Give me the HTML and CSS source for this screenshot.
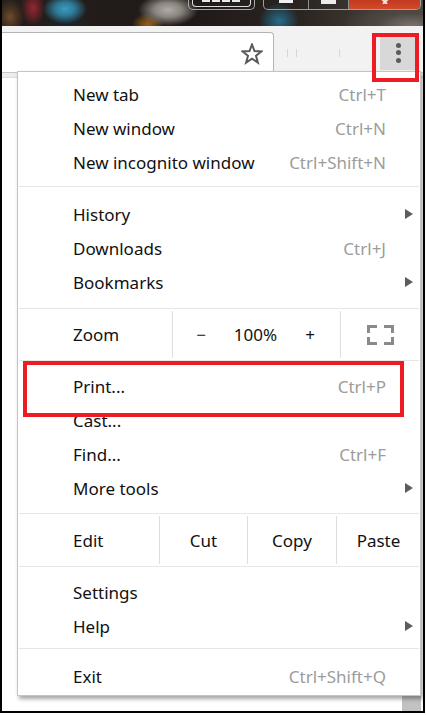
FILE: index.html
```html
<!DOCTYPE html>
<html lang="en">
<head>
    <meta charset="UTF-8">
    <meta name="viewport" content="width=device-width, initial-scale=1.0">
    <title>Chrome menu</title>
    <link rel="stylesheet" href="styles.css">
</head>
<body>
<div class="screen">
    <!-- window caption, only the bottom of it is visible -->
    <div class="titlebar">
        <div class="share"><div class="share-inner"><span class="share-label"></span></div></div>
        <div class="win-btns">
            <div class="win-btn min"><i></i></div>
            <div class="win-btn max"><i></i></div>
            <div class="win-btn close">
                <svg width="14" height="4" viewBox="0 0 14 4"><path d="M2 -3L9 4M12 -3L5 4" stroke="#f2e0dc" stroke-width="2"/></svg>
            </div>
        </div>
    </div>

    <div class="toolbar">
        <div class="omnibox">
            <svg class="star" width="22" height="22" viewBox="-1 -1 22 22">
                <polygon points="10,0.5 12.5,7.1 19.5,7.4 14,11.8 15.9,18.6 10,14.7 4.1,18.6 6,11.8 0.5,7.4 7.5,7.1" fill="none" stroke="#5a5a5a" stroke-width="2" stroke-linejoin="miter"/>
            </svg>
        </div>
        <div class="extensions">
            <span class="tick"></span>
            <span class="tick tick-near"></span>
            <span class="tick tick-far"></span>
        </div>
        <div class="menu-btn">
            <span class="dot"></span>
            <span class="dot"></span>
            <span class="dot"></span>
        </div>
    </div>

    <div class="page">
        <div class="page-top"></div>
        <div class="page-body">
            <div class="content"></div>
            <div class="scrollbar"></div>
        </div>
    </div>

    <!-- app menu -->
    <div class="menu">
        <div class="group group-tabs">
            <div class="item"><span class="label">New tab</span><span class="keys">Ctrl+T</span></div>
            <div class="item"><span class="label">New window</span><span class="keys">Ctrl+N</span></div>
            <div class="item"><span class="label">New incognito window</span><span class="keys">Ctrl+Shift+N</span></div>
        </div>
        <div class="sep"></div>
        <div class="group group-history">
            <div class="item sub"><span class="label">History</span></div>
            <div class="item"><span class="label">Downloads</span><span class="keys">Ctrl+J</span></div>
            <div class="item sub"><span class="label">Bookmarks</span></div>
        </div>
        <div class="sep"></div>
        <div class="split split-zoom">
            <div class="cell cell-label zoom-label">Zoom</div>
            <div class="cell zoom-ctrl">
                <span class="zoom-minus">−</span>
                <span class="zoom-value">100%</span>
                <span class="zoom-plus">+</span>
            </div>
            <div class="cell fullscreen">
                <svg width="27" height="20" viewBox="0 0 27 20">
                    <path d="M1.5 8V1.5H10M17 1.5H25.5V8M25.5 12V18.5H17M10 18.5H1.5V12" fill="none" stroke="#8a8a8a" stroke-width="3"/>
                </svg>
            </div>
        </div>
        <div class="sep"></div>
        <div class="group group-page">
            <div class="item"><span class="label">Print...</span><span class="keys">Ctrl+P</span></div>
            <div class="item"><span class="label">Cast...</span></div>
            <div class="item"><span class="label">Find...</span><span class="keys">Ctrl+F</span></div>
            <div class="item sub"><span class="label">More tools</span></div>
        </div>
        <div class="sep"></div>
        <div class="split split-edit">
            <div class="cell cell-label edit-label">Edit</div>
            <div class="cell edit-cut">Cut</div>
            <div class="cell edit-copy">Copy</div>
            <div class="cell edit-paste">Paste</div>
        </div>
        <div class="sep"></div>
        <div class="group group-settings">
            <div class="item"><span class="label">Settings</span></div>
            <div class="item sub"><span class="label">Help</span></div>
        </div>
        <div class="sep"></div>
        <div class="group group-exit">
            <div class="item"><span class="label">Exit</span><span class="keys">Ctrl+Shift+Q</span></div>
        </div>
    </div>

    <!-- red outlines drawn on top -->
    <div class="mark mark-menu"></div>
    <div class="mark mark-print"></div>
</div>
</body>
</html>
```

FILE: styles.css
```css
* {
    box-sizing: border-box;
}

body {
    margin: 0;
    background-color: #fff;
    font-family: "Noto Sans", "Open Sans", sans-serif;
}

.screen {
    position: relative;
    display: flex;
    flex-direction: column;
    width: 425px;
    height: 713px;
    border-left: 2px solid #000;
    border-right: 2px solid #000;
    border-bottom: 2px solid #000;
    overflow: hidden;
}

/* blurred wallpaper behind the caption buttons */
.titlebar {
    flex: none;
    display: flex;
    align-items: flex-start;
    gap: 8px;
    height: 26px;
    padding-left: 186px;
    background:
        radial-gradient(ellipse 12px 18px at 31px 8px, #8e2a33 0%, #6a2228 40%, transparent),
        radial-gradient(ellipse 22px 15px at 63px 9px, #3c9cbe 0%, #2d7896 45%, transparent),
        radial-gradient(ellipse 26px 9px at 66px 24px, #1a262c 0%, transparent),
        radial-gradient(ellipse 14px 18px at 8px 17px, #6e4c2c 0%, #4a3422 45%, transparent),
        radial-gradient(ellipse 30px 16px at 166px 10px, #b2aca6 0%, #8a847e 45%, transparent),
        radial-gradient(ellipse 16px 11px at 146px 24px, #96601f 0%, #6a4418 45%, transparent),
        radial-gradient(ellipse 20px 18px at 277px 21px, #2c6a88 0%, #244f62 40%, transparent),
        radial-gradient(ellipse 70px 26px at 410px 26px, #7a736c 0%, #4e4843 50%, transparent),
        linear-gradient(90deg, #241e1b, #1f1a18 45%, #2a2421 70%, #4c4743);
}

.share {
    width: 67px;
    height: 10px;
    padding: 0 3px 2px;
    border: 1px solid #a8a8a8;
    border-top: 0;
    border-radius: 0 0 5px 5px;
}

.share-inner {
    display: flex;
    justify-content: center;
    height: 100%;
    border: 1px solid #dcdcdc;
    border-top: 0;
    border-radius: 0 0 4px 4px;
}

.share-label {
    width: 40px;
    height: 2px;
    background: repeating-linear-gradient(90deg, #e8e8e8 0 8px, transparent 8px 10px);
}

.win-btns {
    display: flex;
    width: 158px;
    height: 10px;
    border: 1px solid #a0a0a0;
    border-top: 0;
    border-radius: 0 0 5px 5px;
    overflow: hidden;
}

.win-btn {
    display: flex;
    justify-content: center;
    border-left: 1px solid #909090;
}

.win-btn.min {
    width: 44px;
    border-left: 0;
}

.win-btn.max {
    width: 40px;
}

.win-btn.close {
    flex: 1;
    background: linear-gradient(#c2391d, #d24a2c);
}

.win-btn.min i {
    width: 14px;
    height: 3px;
    background-color: #f0f0f0;
}

.win-btn.max i {
    width: 15px;
    height: 4px;
    background-color: #ececec;
}

/* toolbar */
.toolbar {
    flex: none;
    display: flex;
    height: 46px;
    background-color: #f2f2f2;
}

.omnibox {
    display: flex;
    align-items: center;
    justify-content: flex-end;
    width: 272px;
    height: 40px;
    margin-top: 6px;
    padding: 2px 10px 0 0;
    background-color: #fff;
    border-top: 1px solid #b4b4b4;
    border-right: 1px solid #b4b4b4;
    border-radius: 0 4px 0 0;
}

.extensions {
    flex: 1;
    display: flex;
    align-items: center;
    padding-left: 13px;
}

.tick {
    width: 1px;
    height: 8px;
    margin-top: 8px;
    background-color: #d6d6d6;
}

.tick-near {
    margin-left: 8px;
}

.tick-far {
    margin-left: 42px;
}

.menu-btn {
    display: flex;
    flex-direction: column;
    align-items: center;
    justify-content: center;
    gap: 2.5px;
    width: 36px;
    height: 35px;
    margin: 9px 7px 0 0;
    background-color: #d8d8d8;
}

.dot {
    width: 5px;
    height: 5px;
    border-radius: 50%;
    background-color: #5a5a5a;
}

/* page under the menu */
.page {
    flex: 1;
    display: flex;
    flex-direction: column;
}

.page-top {
    height: 6px;
    background-color: #ececec;
    border-top: 1px solid #c6c6c6;
    border-bottom: 1px solid #dedede;
}

.page-body {
    flex: 1;
    display: flex;
}

.content {
    flex: 1;
}

.scrollbar {
    width: 19px;
    margin-right: 2px;
    background-color: #c2c2c2;
}

/* menu */
.menu {
    position: absolute;
    left: 15px;
    top: 71px;
    width: 404px;
    background-color: #fff;
    border: 1px solid #c4c4c4;
    box-shadow: 2px 3px 4px rgba(0, 0, 0, 0.35);
    font-size: 17px;
    color: #111;
}

.group-tabs { padding: 5px 0 7px; }
.group-history { padding: 10px 0 9px; }
.group-page { padding: 8px 0; }
.group-settings { padding: 8px 0 5px; }
.group-exit { padding: 10px 0 2px; }

.sep {
    height: 1px;
    margin: 0 1px;
    background-color: #e6e6e6;
}

.item {
    position: relative;
    display: flex;
    align-items: center;
    height: 34px;
    padding: 0 34px 0 55px;
}

.label {
    flex: 1;
}

.keys {
    color: #9c9c9c;
}

/* submenu arrow */
.item.sub::after {
    content: "";
    position: absolute;
    right: 7px;
    top: 12px;
    border-left: 8px solid #5c5c5c;
    border-top: 5px solid transparent;
    border-bottom: 5px solid transparent;
}

.split {
    display: flex;
}

.split-zoom {
    height: 51px;
}

.split-edit {
    height: 52px;
}

.cell {
    display: flex;
    align-items: center;
    justify-content: center;
}

.cell + .cell {
    margin: 2px 0;
    border-left: 1px solid #dedede;
}

.cell-label {
    justify-content: flex-start;
    padding-left: 55px;
}

.zoom-label { width: 154px; }
.zoom-ctrl { width: 168px; justify-content: flex-start; }
.fullscreen { flex: 1; }

.zoom-minus,
.zoom-plus {
    width: 56px;
    text-align: center;
}

.zoom-value {
    width: 53px;
    text-align: center;
}

.edit-label { width: 141px; }
.edit-cut { width: 88px; }
.edit-copy { width: 89px; }
.edit-paste { flex: 1; }

/* red outlines */
.mark {
    position: absolute;
    border: 4px solid #ed1c24;
}

.mark-menu {
    left: 370px;
    top: 33px;
    width: 47px;
    height: 49px;
}

.mark-print {
    left: 21px;
    top: 361px;
    width: 381px;
    height: 56px;
}
```
